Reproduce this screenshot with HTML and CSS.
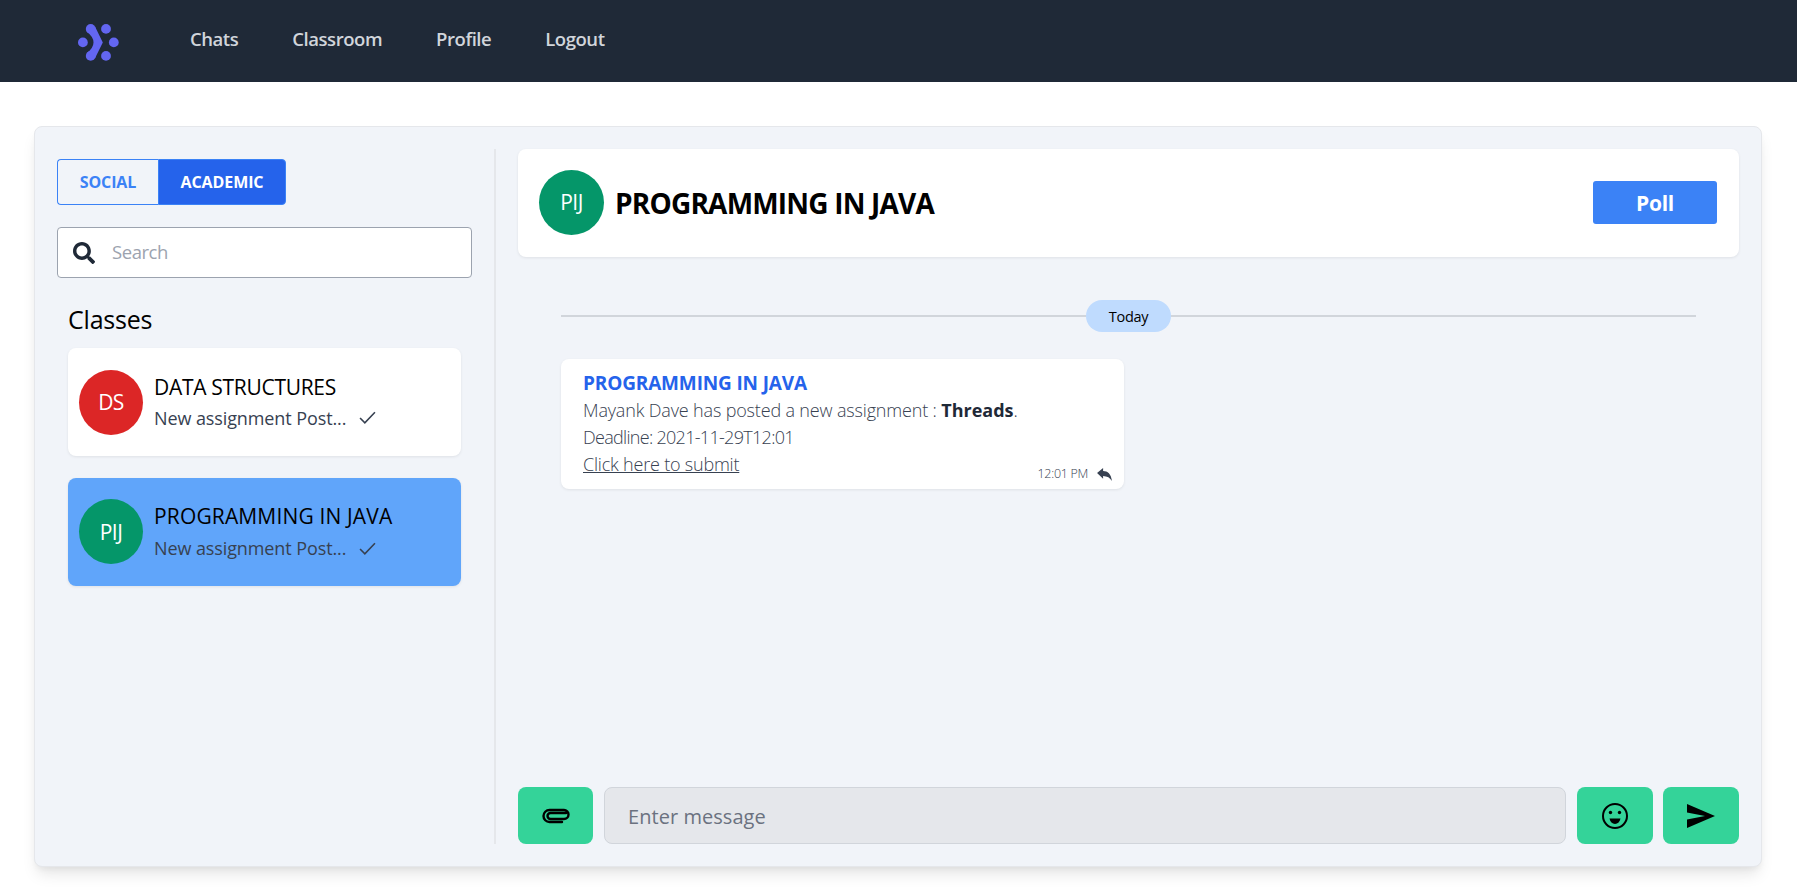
FILE: index.html
```html
<!DOCTYPE html>
<html lang="en">
<head>
<meta charset="utf-8">
<title>Chats</title>
<link rel="stylesheet" href="styles.css">
</head>
<body>
<nav class="nav">
  <svg class="logo" viewBox="0 0 41 37" aria-hidden="true">
    <g fill="#6366f1">
      <circle cx="28" cy="4.900" r="4.900"/><circle cx="35.800" cy="18.400" r="4.900"/><circle cx="28" cy="31.900" r="4.900"/><circle cx="4.900" cy="18.400" r="4.900"/>
      <circle cx="12.700" cy="4.900" r="4.900"/><circle cx="12.700" cy="31.900" r="4.900"/>
      <path d="M8.500 7.500 L17 2.500 L24.800 18.400 L17 34.300 L8.500 29.300 Q15.500 24 15.500 18.400 Q15.500 12.800 8.500 7.500z"/>
    </g>
  </svg>
  <div class="nav-links">
    <a class="nav-link">Chats</a>
    <a class="nav-link">Classroom</a>
    <a class="nav-link">Profile</a>
    <a class="nav-link">Logout</a>
  </div>
</nav>
<main class="panel">
  <aside class="side">
    <div class="toggle">
      <button class="tab tab-off">SOCIAL</button>
      <button class="tab tab-on">ACADEMIC</button>
    </div>
    <label class="search">
      <svg class="search-icon" viewBox="0 0 512 512" aria-hidden="true"><path fill="#1f2937" d="M505 442.700L405.300 343c-4.500-4.500-10.600-7-17-7H372c27.600-35.300 44-79.700 44-128C416 93.100 322.900 0 208 0S0 93.100 0 208s93.100 208 208 208c48.300 0 92.700-16.400 128-44v16.300c0 6.400 2.500 12.500 7 17l99.700 99.700c9.400 9.400 24.600 9.400 33.900 0l28.300-28.300c9.400-9.400 9.400-24.600.1-34zM208 336c-70.700 0-128-57.200-128-128 0-70.700 57.200-128 128-128 70.700 0 128 57.200 128 128 0 70.700-57.200 128-128 128z"/></svg>
      <input class="search-input" type="text" placeholder="Search">
    </label>
    <h2 class="classes-title">Classes</h2>
    <div class="class-card">
      <div class="avatar avatar-red">DS</div>
      <div class="class-text">
        <div class="class-name">DATA STRUCTURES</div>
        <div class="class-sub"><span>New assignment Post...</span>
          <svg class="check" viewBox="0 0 16 16" aria-hidden="true"><path d="M1 8.500L5.500 13 15 3" fill="none" stroke="#374151" stroke-width="1.500"/></svg>
        </div>
      </div>
    </div>
    <div class="class-card class-card-active">
      <div class="avatar avatar-green">PIJ</div>
      <div class="class-text">
        <div class="class-name">PROGRAMMING IN JAVA</div>
        <div class="class-sub"><span>New assignment Post...</span>
          <svg class="check" viewBox="0 0 16 16" aria-hidden="true"><path d="M1 8.500L5.500 13 15 3" fill="none" stroke="#374151" stroke-width="1.500"/></svg>
        </div>
      </div>
    </div>
  </aside>
  <section class="chat">
    <header class="chat-head">
      <div class="avatar avatar-green avatar-head">PIJ</div>
      <h1 class="chat-title">PROGRAMMING IN JAVA</h1>
      <button class="poll">Poll</button>
    </header>
    <div class="messages">
      <div class="day"><span class="day-line"></span><span class="day-pill">Today</span><span class="day-line"></span></div>
      <article class="msg">
        <div class="msg-title">PROGRAMMING IN JAVA</div>
        <div class="msg-line msg-line-wide">Mayank Dave has posted a new assignment : <b class="msg-strong">Threads</b>.</div>
        <div class="msg-line msg-line-date">Deadline: 2021-11-29T12:01</div>
        <a class="msg-link">Click here to submit</a>
        <div class="msg-meta">
          <span>12:01 PM</span>
          <svg class="reply" viewBox="0 0 16 14" aria-hidden="true"><path fill="#374151" d="M0 5.500L6.500 0V3.200C11.500 3.400 15 6 16 14C14 10.500 11 8.600 6.500 8.500V11.500z"/></svg>
        </div>
      </article>
    </div>
    <footer class="composer">
      <button class="green-btn green-btn-clip">
        <svg class="ico-clip" viewBox="0 0 28 16" aria-hidden="true"><path d="M24 5.500H8.500a3 3 0 0 0 0 6H22a4.500 4.500 0 0 0 0-9H7.500a6 6 0 0 0 0 12H20" fill="none" stroke="#000" stroke-width="2.400" stroke-linecap="round" transform="translate(0 -.5)"/></svg>
      </button>
      <input class="msg-input" type="text" placeholder="Enter message">
      <button class="green-btn">
        <svg class="ico-smile" viewBox="0 0 28 28" aria-hidden="true"><circle cx="14" cy="14" r="12" fill="none" stroke="#000" stroke-width="2"/><circle cx="9.500" cy="10.500" r="1.700"/><circle cx="18.500" cy="10.500" r="1.700"/><path d="M8.500 16.500h11c-.6 3.400-2.800 5.400-5.500 5.400s-4.900-2-5.500-5.400z"/></svg>
      </button>
      <button class="green-btn green-btn-send">
        <svg class="ico-send" viewBox="0 0 28 24" aria-hidden="true"><path d="M0 0L28 12 0 24V15.500L18 12 0 8.500z"/></svg>
      </button>
    </footer>
  </section>
</main>
</body>
</html>
```
FILE: styles.css
```css
* { box-sizing: border-box; }
html, body { margin: 0; padding: 0; }
body {
  height: 893px;
  overflow: hidden;
  background: #fff;
  font-family: "Open Sans", "Noto Sans", sans-serif;
  color: #000;
}
button, input { font-family: inherit; }

.nav {
  height: 82px;
  background: #1f2937;
  display: flex;
  align-items: center;
  padding-left: 78px;
}
.logo { width: 41px; height: 37px; display: block; margin-top: 2px; }
.nav-links { display: flex; margin-left: 71px; gap: 54px; margin-bottom: 6px; }
.nav-link {
  color: #d1d5db;
  font-size: 18.500px;
  font-weight: 600;
  letter-spacing: -0.45px;
}

.panel {
  margin: 44px 35px 0 34px;
  height: 741px;
  background: #f1f4f9;
  border: 1px solid #e5e7eb;
  border-radius: 8px;
  box-shadow: 0 10px 15px -3px rgba(0,0,0,.1), 0 4px 6px -2px rgba(0,0,0,.05);
  padding: 22px 22px 22px 22px;
  display: flex;
}

.side {
  width: 439px;
  flex: none;
  border-right: 2px solid #e5e7eb;
  padding-top: 10px;
}
.toggle { display: flex; width: 229px; height: 46px; }
.tab {
  font-size: 16px;
  font-weight: 700;
  letter-spacing: -0.1px;
  border: 1px solid #3b82f6;
  padding: 0;
}
.tab-off {
  width: 101px;
  background: transparent;
  color: #3b82f6;
  border-radius: 4px 0 0 4px;
  border-right: 0;
}
.tab-on {
  flex: 1;
  background: #2563eb;
  color: #fff;
  border-radius: 0 4px 4px 0;
}
.search {
  display: flex;
  align-items: center;
  width: 415px;
  height: 51px;
  margin-top: 22px;
  background: #fff;
  border: 1px solid #9ca3af;
  border-radius: 4px;
  padding-left: 15px;
}
.search-icon { width: 22px; height: 22px; flex: none; }
.search-input {
  border: 0;
  outline: 0;
  background: transparent;
  margin-left: 17px;
  flex: 1;
  min-width: 0;
  padding: 0 0 2px;
  font-size: 18.500px;
  letter-spacing: -0.45px;
  color: #111827;
}
.search-input::placeholder { color: #9ca3af; opacity: 1; font-weight: 400; }
.classes-title {
  margin: 25px 0 0 11px;
  height: 45px;
  font-size: 25px;
  line-height: 32px;
  font-weight: 400;
  letter-spacing: -0.2px;
}
.class-card {
  width: 393px;
  height: 108px;
  margin: 0 0 22px 11px;
  background: #fff;
  border-radius: 8px;
  box-shadow: 0 1px 3px rgba(0,0,0,.08);
  display: flex;
  align-items: center;
  padding-left: 11px;
}
.class-card-active { background: #60a5fa; padding-bottom: 1px; }
.avatar {
  width: 64px;
  height: 65px;
  flex: none;
  border-radius: 50%;
  color: #fff;
  display: flex;
  align-items: center;
  justify-content: center;
  font-size: 21px;
  letter-spacing: -0.6px;
}
.avatar-red { background: #dc2626; }
.avatar-green { background: #059669; }
.class-text { margin-left: 11px; min-width: 0; }
.class-card-active .class-text { padding-top: 1px; }
.class-name {
  font-size: 21px;
  line-height: 28px;
  letter-spacing: -0.3px;
  color: #000;
}
.class-card-active .class-name { letter-spacing: 0.15px; }
.class-sub {
  display: flex;
  align-items: center;
  margin-top: 3px;
  font-size: 18px;
  line-height: 28px;
  letter-spacing: -0.1px;
  color: #374151;
}
.class-card-active .class-sub { margin-top: 4px; }
.check { width: 17px; height: 17px; margin-left: 13px; }

.chat {
  flex: 1;
  min-width: 0;
  padding-left: 22px;
  display: flex;
  flex-direction: column;
}
.chat-head {
  height: 108px;
  flex: none;
  background: #fff;
  border-radius: 8px;
  box-shadow: 0 1px 3px rgba(0,0,0,.08);
  display: flex;
  align-items: center;
  padding: 0 22px 2px 21px;
}
.avatar-head { width: 65px; }
.chat-title {
  margin: 2px 0 0 11px;
  flex: 1;
  font-size: 28px;
  font-weight: 700;
  letter-spacing: -0.8px;
}
.poll {
  width: 124px;
  height: 43px;
  background: #3b82f6;
  border: 0;
  border-radius: 3px;
  padding: 2px 0 0;
  color: #fff;
  font-size: 21px;
  font-weight: 700;
  letter-spacing: -0.3px;
}
.messages {
  flex: 1;
  min-height: 0;
  padding: 43px 43px 0;
}
.day { display: flex; align-items: center; height: 32px; }
.day-line { flex: 1; height: 2px; background: #d1d5db; }
.day-pill {
  width: 85px;
  height: 32px;
  background: #bfdbfe;
  border-radius: 16px;
  display: flex;
  align-items: center;
  justify-content: center;
  font-size: 14.500px;
  letter-spacing: -0.3px;
}
.msg {
  position: relative;
  width: 563px;
  height: 130px;
  margin-top: 27px;
  background: #fff;
  border-radius: 8px;
  box-shadow: 0 1px 3px rgba(0,0,0,.08);
  padding: 11px 22px 0;
  color: #374151;
  font-size: 18px;
  line-height: 27px;
  font-weight: 300;
}
.msg-title { color: #2563eb; font-weight: 700; font-size: 19px; letter-spacing: -0.15px; }
.msg-line-wide { letter-spacing: -0.16px; }
.msg-line-date { letter-spacing: -0.7px; }
.msg-strong { font-weight: 700; color: #1f2937; letter-spacing: 0; }
.msg-link { text-decoration: underline; display: block; letter-spacing: -0.2px; }
.msg-meta {
  position: absolute;
  right: 12px;
  bottom: 6px;
  display: flex;
  align-items: center;
  gap: 9px;
  font-size: 12.500px;
  line-height: 18px;
  letter-spacing: -0.3px;
}
.reply { width: 15px; height: 13px; }

.composer { display: flex; height: 57px; flex: none; gap: 11px; }
.green-btn {
  width: 76px;
  flex: none;
  background: #34d399;
  border: 0;
  border-radius: 8px;
  padding: 0;
  display: flex;
  align-items: center;
  justify-content: center;
}
.green-btn-clip { width: 75px; }
.green-btn-send { margin-left: -1px; }
.msg-input {
  flex: 1;
  min-width: 0;
  background: #e5e7eb;
  border: 1px solid #d1d5db;
  border-radius: 8px;
  outline: 0;
  padding: 1px 23px 0;
  font-size: 20px;
  letter-spacing: 0.05px;
}
.msg-input::placeholder { color: #6b7280; opacity: 1; }
.ico-clip { width: 28px; height: 16px; }
.ico-smile { width: 28px; height: 28px; }
.ico-send { width: 28px; height: 24px; }
```
